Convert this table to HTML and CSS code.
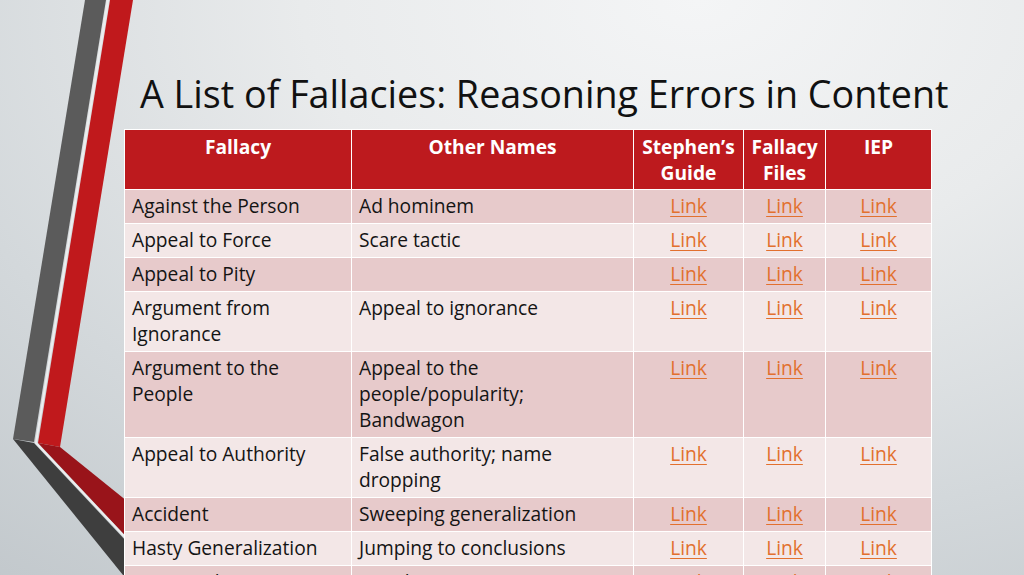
FILE: index.html
```html
<!DOCTYPE html>
<html lang="en">
<head>
<meta charset="utf-8">
<title>A List of Fallacies</title>
<link rel="stylesheet" href="styles.css">
</head>
<body>
<div class="slide">
  <svg class="deco" viewBox="0 0 1024 575" width="1024" height="575" aria-hidden="true">
    <polygon points="85,0 106,0 34,442 13,439" fill="#5b5b5b"/>
    <polygon points="13,439 34,443 158,575 123,575" fill="#3e3e3e"/>
    <polygon points="110,0 133,0 60,447 38,443" fill="#c0191c"/>
    <polygon points="38,443 60,447 200,560 200,615" fill="#99141a"/>
    <polyline points="108,0 36,443 140,553" fill="none" stroke="#eceeef" stroke-width="2"/>
  </svg>
  <div class="content">
    <h1 class="title">A List of Fallacies: Reasoning Errors in Content</h1>
    <table class="fallacies">
      <colgroup>
        <col class="c1"><col class="c2"><col class="c3"><col class="c4"><col class="c5">
      </colgroup>
      <thead>
        <tr>
          <th>Fallacy</th>
          <th>Other Names</th>
          <th>Stephen’s Guide</th>
          <th>Fallacy Files</th>
          <th>IEP</th>
        </tr>
      </thead>
      <tbody>
        <tr><td>Against the Person</td><td>Ad hominem</td><td class="lk"><a href="#">Link</a></td><td class="lk"><a href="#">Link</a></td><td class="lk"><a href="#">Link</a></td></tr>
        <tr><td>Appeal to Force</td><td>Scare tactic</td><td class="lk"><a href="#">Link</a></td><td class="lk"><a href="#">Link</a></td><td class="lk"><a href="#">Link</a></td></tr>
        <tr><td>Appeal to Pity</td><td></td><td class="lk"><a href="#">Link</a></td><td class="lk"><a href="#">Link</a></td><td class="lk"><a href="#">Link</a></td></tr>
        <tr><td>Argument from Ignorance</td><td>Appeal to ignorance</td><td class="lk"><a href="#">Link</a></td><td class="lk"><a href="#">Link</a></td><td class="lk"><a href="#">Link</a></td></tr>
        <tr><td>Argument to the People</td><td>Appeal to the people/popularity; Bandwagon</td><td class="lk"><a href="#">Link</a></td><td class="lk"><a href="#">Link</a></td><td class="lk"><a href="#">Link</a></td></tr>
        <tr><td>Appeal to Authority</td><td>False authority; name dropping</td><td class="lk"><a href="#">Link</a></td><td class="lk"><a href="#">Link</a></td><td class="lk"><a href="#">Link</a></td></tr>
        <tr><td>Accident</td><td>Sweeping generalization</td><td class="lk"><a href="#">Link</a></td><td class="lk"><a href="#">Link</a></td><td class="lk"><a href="#">Link</a></td></tr>
        <tr><td>Hasty Generalization</td><td>Jumping to conclusions</td><td class="lk"><a href="#">Link</a></td><td class="lk"><a href="#">Link</a></td><td class="lk"><a href="#">Link</a></td></tr>
        <tr><td>Begging the Question</td><td>Circular reasoning</td><td class="lk"><a href="#">Link</a></td><td class="lk"><a href="#">Link</a></td><td class="lk"><a href="#">Link</a></td></tr>
      </tbody>
    </table>
  </div>
</div>
</body>
</html>
```

FILE: styles.css
```css
html, body {
  margin: 0;
  padding: 0;
}
body {
  width: 1024px;
  height: 575px;
  overflow: hidden;
  font-family: "Open Sans", "Noto Sans", "Liberation Sans", sans-serif;
}
.slide {
  position: relative;
  width: 1024px;
  height: 575px;
  overflow: hidden;
  background: radial-gradient(ellipse 110% 130% at 68% 0%, #f4f5f6 0%, #e9ebec 35%, #d3d8db 70%, #c2c8cc 100%);
}
.deco {
  position: absolute;
  left: 0;
  top: 0;
  z-index: 0;
}
.content {
  position: relative;
  z-index: 1;
  display: flex;
  flex-direction: column;
  padding: 71px 0 0 124px;
}
.title {
  margin: 0 0 12px 0;
  padding-left: 16px;
  font-weight: 400;
  font-size: 37.7px;
  line-height: 46px;
  color: #111;
  white-space: nowrap;
}
.fallacies {
  border-collapse: collapse;
  table-layout: fixed;
  width: 807px;
  font-size: 19.2px;
  line-height: 26px;
  color: #141414;
}
.c1 { width: 227px; }
.c2 { width: 282px; }
.c3 { width: 110px; }
.c4 { width: 82px; }
.c5 { width: 106px; }
.fallacies th,
.fallacies td {
  border: 1.5px solid #ffffff;
  padding: 3px 7px 4px 7px;
  vertical-align: top;
  text-align: left;
}
.fallacies th {
  background: #bd1a1e;
  color: #ffffff;
  font-weight: 700;
  text-align: center;
  padding: 4px 5px 3px 5px;
}
.fallacies thead tr {
  height: 59px;
}
.fallacies tbody tr:nth-child(odd) td {
  background: #e7cacb;
}
.fallacies tbody tr:nth-child(even) td {
  background: #f3e7e7;
}
.fallacies td.lk {
  text-align: center;
}
.fallacies a {
  color: #e2702e;
  text-decoration: underline;
  text-decoration-thickness: 1px;
  text-underline-offset: 3px;
}
```
